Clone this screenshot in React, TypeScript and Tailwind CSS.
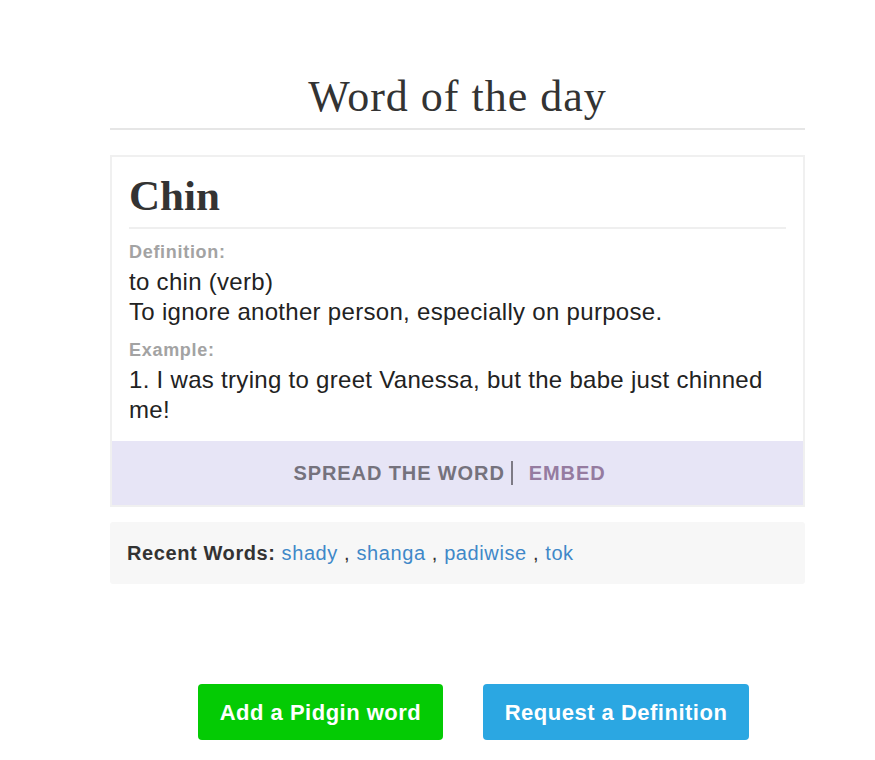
export default function App() {
  const recent = ['shady', 'shanga', 'padiwise', 'tok'];

  return (
    <div className="min-h-screen bg-white pt-[72px] font-['Liberation_Sans',Arial,sans-serif]">
      <div className="ml-[110px] w-[695px]">
        <div className="border-b-2 border-[#e6e6e6] pb-[6px] text-center">
          <h1 className="font-['Liberation_Serif','Times_New_Roman',serif] text-[44px] leading-[50px] tracking-[1px] text-[#333]">
            Word of the day
          </h1>
        </div>

        <div className="mt-[25px] border-2 border-[#f0f0f0]">
          <div className="px-[17px] pb-[16px] pt-[16px]">
            <h2 className="border-b-2 border-[#efefef] pb-[8px] font-['Liberation_Serif','Times_New_Roman',serif] text-[43px] font-bold leading-[46px] text-[#333]">
              Chin
            </h2>
            <div className="mt-[8px] text-[18px] font-bold leading-[30px] tracking-[0.7px] text-[#a3a3a3]">Definition:</div>
            <div className="text-[24px] leading-[30px] tracking-[0.3px] text-[#222]">
              <div>to chin (verb)</div>
              <div>To ignore another person, especially on purpose.</div>
            </div>
            <div className="mt-[8px] text-[18px] font-bold leading-[30px] tracking-[0.7px] text-[#a3a3a3]">Example:</div>
            <div className="text-[24px] leading-[30px] tracking-[0.3px] text-[#222]">
              1. I was trying to greet Vanessa, but the babe just chinned me!
            </div>
          </div>
          <div className="flex h-[64px] items-center justify-center bg-[#e7e5f6] pr-[16px] text-[20px] font-bold tracking-[0.9px]">
            <span className="text-[#75727d]">SPREAD THE WORD</span>
            <span className="ml-[6px] mr-[16px] h-[24px] w-[2px] bg-[#7d7a85]" />
            <span className="text-[#957ba0]">EMBED</span>
          </div>
        </div>

        <div className="mt-[15px] flex h-[62px] items-center rounded-[3px] bg-[#f7f7f7] px-[17px] text-[20px] tracking-[0.6px]">
          <span className="font-bold text-[#333]">Recent Words:</span>
          <span className="ml-[6px]">
            {recent.map((w, i) => (
              <span key={w}>
                <a href="#" className="text-[#3f88c8]">{w}</a>
                {i < recent.length - 1 && <span className="text-[#333]"> , </span>}
              </span>
            ))}
          </span>
        </div>

        <div className="mt-[100px] flex gap-[40px] pl-[88px]">
          <button className="h-[56px] w-[245px] rounded-[4px] bg-[#04cb04] text-[22px] font-bold tracking-[0.5px] text-white">
            Add a Pidgin word
          </button>
          <button className="h-[56px] w-[266px] rounded-[4px] bg-[#2ba7e2] text-[22px] font-bold tracking-[0.5px] text-white">
            Request a Definition
          </button>
        </div>
      </div>
    </div>
  );
}
